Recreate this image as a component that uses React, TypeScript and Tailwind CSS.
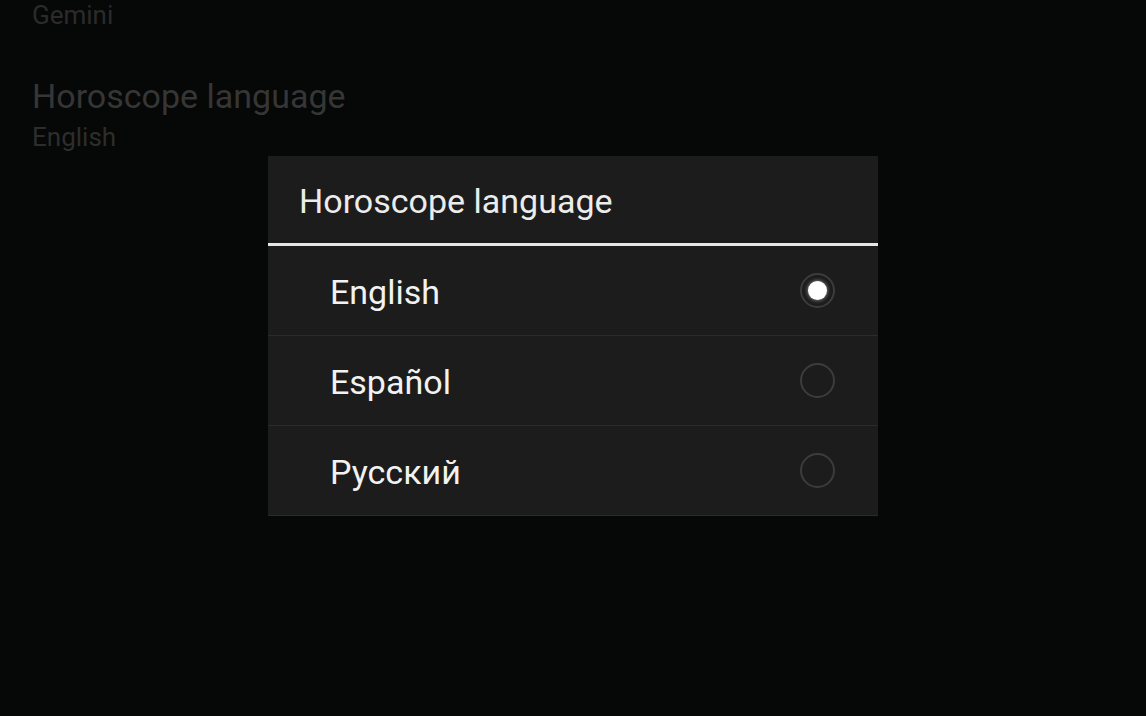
import { FC } from 'react'

const LANGS = ['English', 'Español', 'Русский']

const Radio: FC<{ checked: boolean }> = ({ checked }) => (
  <span className="flex h-[35px] w-[35px] items-center justify-center rounded-full border-2 border-[#3c3c3c]">
    {checked && <span className="h-[19px] w-[19px] rounded-full bg-white shadow-[0_0_4px_rgba(255,255,255,0.6)]" />}
  </span>
)

export default function App() {
  return (
    <div
      className="relative h-[716px] w-[1146px] overflow-hidden bg-[#060707]"
      style={{ fontFamily: 'Roboto, "Noto Sans", sans-serif' }}
    >
      <div className="flex flex-col px-8">
        <div className="-mt-[1px] text-[26px] leading-[32px] text-[#2b2b2b]">Gemini</div>
        <div className="mt-[45px] text-[34px] leading-[40px] text-[#363636]">Horoscope language</div>
        <div className="mt-[3px] text-[26px] leading-[36px] text-[#2d2d2d]">English</div>
      </div>

      <div className="absolute top-[156px] left-[268px] w-[610px] bg-[#1c1c1c]">
        <div className="flex h-[87px] items-center pt-[4px] pl-[31px] text-[34px] text-[#ececec]">
          Horoscope language
        </div>
        <div className="h-[3px] bg-[#e6e6e6]" />
        {LANGS.map((lang, i) => (
          <div
            key={lang}
            className="flex h-[90px] items-center justify-between border-b border-[#2b2b2b] pr-[43px] pl-[62px]"
          >
            <span className="pt-[4px] text-[34px] text-[#f2f2f2]">{lang}</span>
            <Radio checked={i === 0} />
          </div>
        ))}
      </div>
    </div>
  )
}
